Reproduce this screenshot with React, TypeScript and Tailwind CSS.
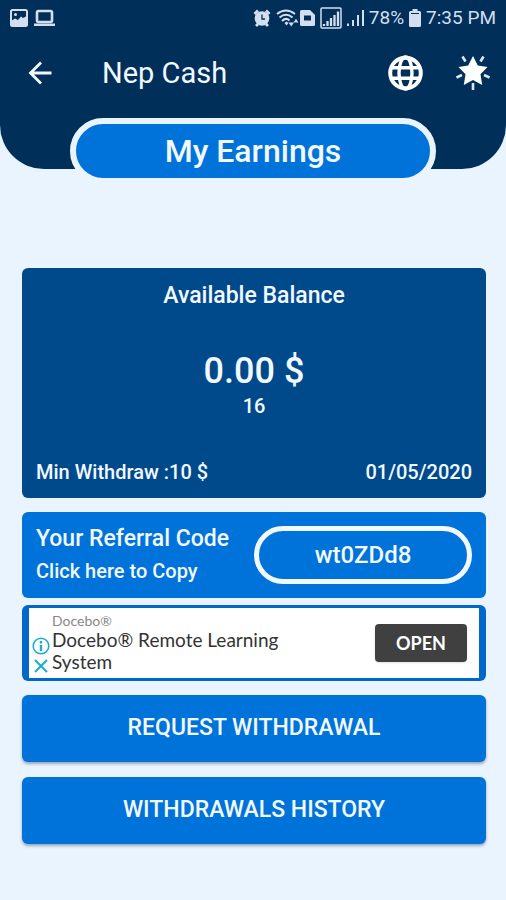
import type { ReactNode } from "react";

const balance = {
  amount: "0.00 $",
  points: "16",
  minWithdraw: "10 $",
  date: "01/05/2020",
};

const referralCode = "wt0ZDd8";

export default function App() {
  return (
    <div className="min-h-screen bg-[#e9f4ff] font-['Roboto',sans-serif] text-[#f2f8ff]">
      <header className="rounded-b-[44px] bg-[#002f5a] pb-[59px]">
        <StatusBar />
        <nav className="flex h-[74px] items-center pr-4 pl-7">
          <button type="button" aria-label="Back">
            <BackIcon />
          </button>
          <h1 className="ml-[50px] flex-1 text-[29px] leading-8">Nep Cash</h1>
          <button type="button" aria-label="Language" className="mr-8">
            <GlobeIcon />
          </button>
          <button type="button" aria-label="Rate">
            <StarIcon />
          </button>
        </nav>
      </header>

      <h2 className="relative mx-[70px] -mt-[51px] flex h-[66px] items-center justify-center rounded-full border-6 border-[#e9f4ff] bg-[#0073da] text-[32px] font-medium">
        My Earnings
      </h2>

      <main className="mt-[84px] pr-5 pb-14 pl-[22px]">
        <section className="rounded-md bg-[#004a8c] px-[14px] pt-3 pb-3 font-medium">
          <h3 className="text-center text-[23px] leading-8">Available Balance</h3>
          <p className="mt-9 text-center text-4xl leading-[46px]">{balance.amount}</p>
          <p className="text-center text-[20px] leading-6">{balance.points}</p>
          <div className="mt-10 flex items-center justify-between text-[20px] leading-7">
            <span>Min Withdraw :{balance.minWithdraw}</span>
            <span>{balance.date}</span>
          </div>
        </section>

        <button
          type="button"
          className="mt-[14px] flex h-[86px] w-full items-center justify-between rounded-md bg-[#0073da] px-[14px] text-left font-medium"
        >
          <span>
            <span className="block text-[23px] leading-8">Your Referral Code</span>
            <span className="block text-[20px] leading-8">Click here to Copy</span>
          </span>
          <span className="flex h-[58px] w-[218px] items-center justify-center rounded-full border-5 border-[#f2f8ff] text-2xl">
            {referralCode}
          </span>
        </button>

        <AdBanner />

        <div className="mt-[14px] space-y-[15px]">
          <ActionButton>Request Withdrawal</ActionButton>
          <ActionButton>Withdrawals History</ActionButton>
        </div>
      </main>
    </div>
  );
}

function ActionButton({ children }: { children: ReactNode }) {
  return (
    <button
      type="button"
      className="block h-[67px] w-full rounded-md bg-[#0073da] text-[23px] font-medium uppercase shadow-[0_2px_3px_rgba(0,20,60,0.35)]"
    >
      {children}
    </button>
  );
}

function AdBanner() {
  return (
    <aside className="mt-[7px] rounded-md bg-[#0068c8] px-[7px] py-[3px]">
      <div className="flex h-[70px] items-center bg-white pr-3 pl-[3px] font-['Lato',sans-serif] text-[#333]">
        <div className="mt-6 flex w-[18px] flex-col items-center gap-1">
          <button type="button" aria-label="Ad info">
            <InfoIcon />
          </button>
          <button type="button" aria-label="Close ad">
            <CloseIcon />
          </button>
        </div>
        <div className="ml-[2px] w-[245px]">
          <p className="text-[14px] leading-4 text-[#888]">Docebo®</p>
          <p className="text-[19px] leading-[22px]">Docebo® Remote Learning System</p>
        </div>
        <a
          href="#"
          className="ml-auto flex h-[38px] w-[92px] items-center justify-center rounded-sm bg-[#404040] text-[18px] font-bold text-white shadow"
        >
          OPEN
        </a>
      </div>
    </aside>
  );
}

function StatusBar() {
  return (
    <div className="flex h-9 items-center justify-between px-[10px] text-[19px] text-[#d3deee]">
      <div className="flex items-center gap-[6px]">
        <PictureIcon />
        <LaptopIcon />
      </div>
      <div className="flex items-center gap-[5px]">
        <AlarmIcon />
        <WifiIcon />
        <SimIcon />
        <BoxedSignalIcon />
        <SignalIcon />
        <span>78%</span>
        <BatteryIcon />
        <span>7:35 PM</span>
      </div>
    </div>
  );
}

function PictureIcon() {
  return (
    <svg width="18" height="18" viewBox="0 0 18 18">
      <rect x="1" y="1" width="16" height="16" rx="1.5" fill="none" stroke="currentColor" strokeWidth="2" />
      <path d="M1 12 L5 9.5 L8 11 L11 7.5 L13 9 L17 7 V17 H1Z" fill="currentColor" />
      <circle cx="5.5" cy="5.5" r="1.5" fill="currentColor" />
    </svg>
  );
}

function LaptopIcon() {
  return (
    <svg width="21" height="18" viewBox="0 0 21 18">
      <rect x="3" y="2" width="15" height="11" rx="1.5" fill="none" stroke="currentColor" strokeWidth="2.6" />
      <path d="M0 14.500h21v2.500H0z" fill="currentColor" />
    </svg>
  );
}

function AlarmIcon() {
  return (
    <svg width="18" height="18" viewBox="0 0 18 18">
      <circle cx="9" cy="9.5" r="7.300" fill="currentColor" />
      <path d="M1.5 5 L5 1.5 M16.5 5 L13 1.5 M3 17 L5 15 M15 17 L13 15" stroke="currentColor" strokeWidth="2.8" />
      <path d="M9 5.5V10h3" fill="none" stroke="#002f5a" strokeWidth="1.3" />
    </svg>
  );
}

function WifiIcon() {
  return (
    <svg width="23" height="18" viewBox="0 0 23 18" fill="none" stroke="currentColor" strokeWidth="2">
      <path d="M1 5Q10 -2 19 5M3.500 8.500Q10 3 16.500 8.500M6 12Q10 8 13.500 11.500" />
      <path d="M8.500 14l2-1.500l2 1.500l-2 2.500z" fill="currentColor" stroke="none" />
      <path d="M12.500 13.500h5.500L15.250 17.500zM17.500 13.500h5L20 9.800z" fill="currentColor" stroke="none" />
    </svg>
  );
}

function SimIcon() {
  return (
    <svg width="15" height="18" viewBox="0 0 15 18" className="-ml-1">
      <path d="M1.500 1H10l5 5v9.500Q15 17 13.500 17h-12Q0 17 0 15.500v-13Q0 1 1.500 1Z" fill="currentColor" />
      <path d="M4 6.500h7v5H4z" fill="#002f5a" />
    </svg>
  );
}

function BoxedSignalIcon() {
  return (
    <svg width="22" height="22" viewBox="0 0 22 22">
      <rect x="1" y="1" width="20" height="20" rx="1" fill="none" stroke="currentColor" strokeWidth="1.5" />
      <path d="M4 19v-2M7.500 19v-5M11 19v-8M14.500 19V8M18 19V4.500" stroke="currentColor" strokeWidth="2.3" />
    </svg>
  );
}

function SignalIcon() {
  return (
    <svg width="17" height="18" viewBox="0 0 17 18">
      <path d="M1 17v-2.500M6 17v-6M11 17V6M16 17V1" stroke="currentColor" strokeWidth="2" />
    </svg>
  );
}

function BatteryIcon() {
  return (
    <svg width="12" height="18" viewBox="0 0 12 18">
      <path d="M3.500 0h5v2h2Q12 2 12 3.500v13Q12 18 10.500 18h-9Q0 18 0 16.500v-13Q0 2 1.500 2h2z" fill="currentColor" />
      <path d="M2 4.500h8" stroke="#002f5a" strokeWidth="1" />
    </svg>
  );
}

function BackIcon() {
  return (
    <svg width="24" height="24" viewBox="0 0 24 24" fill="none" stroke="currentColor" strokeWidth="2.800">
      <path d="M23.500 12H2.500M13 1.500L2.500 12L13 22.500" />
    </svg>
  );
}

function GlobeIcon() {
  return (
    <svg width="36" height="36" viewBox="0 0 36 36" fill="none" stroke="white" strokeWidth="3.400">
      <circle cx="17.500" cy="18" r="15.300" strokeWidth="4" />
      <ellipse cx="17.500" cy="18" rx="6.500" ry="16" />
      <path d="M4 12.800h27M4 23.200h27" />
    </svg>
  );
}

function StarIcon() {
  return (
    <svg width="34" height="36" viewBox="0 0 34 36">
      <path
        d="M17 1L21.800 10.600L31.500 12L24.500 19.300L26.200 30L17 25L7.800 30L9.500 19.300L2.500 12L12.200 10.600Z"
        fill="white"
      />
      <path d="M6.500 1.500L9.500 6.500M27.500 1.500L24.500 6.500M0.500 22.500L6 20M33.500 22.500L28 20M17 28v7" stroke="#dbe8f6" strokeWidth="2.600" />
    </svg>
  );
}

function InfoIcon() {
  return (
    <svg width="18" height="18" viewBox="0 0 18 18" className="block">
      <circle cx="9" cy="9" r="7.800" fill="none" stroke="#19afc8" strokeWidth="1.600" />
      <path d="M9 4v2.500M9 8v6" stroke="#19afc8" strokeWidth="2.400" />
    </svg>
  );
}

function CloseIcon() {
  return (
    <svg width="14" height="14" viewBox="0 0 14 14" className="block">
      <path d="M1 1L13 13M13 1L1 13" stroke="#19afc8" strokeWidth="2" />
    </svg>
  );
}
